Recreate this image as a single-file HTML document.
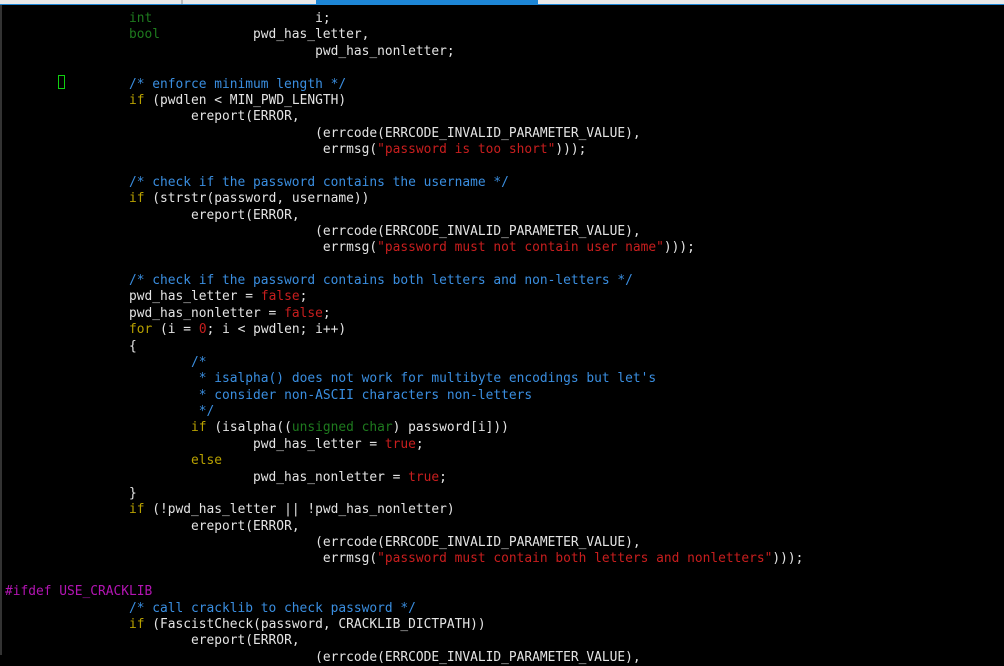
<!DOCTYPE html>
<html><head><meta charset="utf-8"><style>
html,body{margin:0;padding:0;background:#000;width:1004px;height:655px;overflow:hidden}
.top{position:absolute;left:0;top:0;width:1004px;height:4px;background:#e8e8e8}
.tab{position:absolute;top:0;height:4px;background:#d8d8d8}
.blue{position:absolute;left:316px;top:0;width:222px;height:5px;background:#1d86d6}
.line{position:absolute;left:0;top:4px;width:1004px;height:1px;background:#1d86d6}
.lb{position:absolute;left:0;top:5px;width:2px;height:650px;background:#333}
pre{position:absolute;left:5px;top:11px;margin:0;font-family:"DejaVu Sans Mono","Liberation Mono",monospace;font-size:12.88px;line-height:16.37px;color:#e4e4e4;tab-size:8;-moz-tab-size:8}
.t{color:#1e7a1e}.c{color:#3a8ee0}.s{color:#c81e1e}.k{color:#b8a100}.p{color:#b315b3}
.cur{position:absolute;left:58px;top:75px;width:7px;height:14px;border:1px solid #10d010;box-sizing:border-box}
</style></head><body>
<div class="top"></div>
<div class="tab" style="left:181px;width:2px;background:#bbb"></div>
<div class="blue"></div><div class="line"></div><div class="lb"></div>
<div class="cur"></div>
<pre>		<span class="t">int</span>			i;
		<span class="t">bool</span>		pwd_has_letter,
					pwd_has_nonletter;

		<span class="c">/* enforce minimum length */</span>
		<span class="k">if</span> (pwdlen &lt; MIN_PWD_LENGTH)
			ereport(ERROR,
					(errcode(ERRCODE_INVALID_PARAMETER_VALUE),
					 errmsg(<span class="s">"password is too short"</span>)));

		<span class="c">/* check if the password contains the username */</span>
		<span class="k">if</span> (strstr(password, username))
			ereport(ERROR,
					(errcode(ERRCODE_INVALID_PARAMETER_VALUE),
					 errmsg(<span class="s">"password must not contain user name"</span>)));

		<span class="c">/* check if the password contains both letters and non-letters */</span>
		pwd_has_letter = <span class="s">false</span>;
		pwd_has_nonletter = <span class="s">false</span>;
		<span class="k">for</span> (i = <span class="s">0</span>; i &lt; pwdlen; i++)
		{
			<span class="c">/*</span>
<span class="c">			 * isalpha() does not work for multibyte encodings but let's</span>
<span class="c">			 * consider non-ASCII characters non-letters</span>
<span class="c">			 */</span>
			<span class="k">if</span> (isalpha((<span class="t">unsigned char</span>) password[i]))
				pwd_has_letter = <span class="s">true</span>;
			<span class="k">else</span>
				pwd_has_nonletter = <span class="s">true</span>;
		}
		<span class="k">if</span> (!pwd_has_letter || !pwd_has_nonletter)
			ereport(ERROR,
					(errcode(ERRCODE_INVALID_PARAMETER_VALUE),
					 errmsg(<span class="s">"password must contain both letters and nonletters"</span>)));

<span class="p">#ifdef USE_CRACKLIB</span>
		<span class="c">/* call cracklib to check password */</span>
		<span class="k">if</span> (FascistCheck(password, CRACKLIB_DICTPATH))
			ereport(ERROR,
					(errcode(ERRCODE_INVALID_PARAMETER_VALUE),
</pre>
</body></html>
